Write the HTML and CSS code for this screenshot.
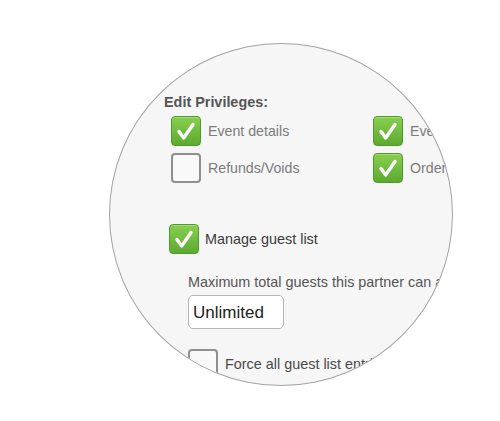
FILE: index.html
```html
<!DOCTYPE html>
<html lang="en">

<head>
    <meta charset="UTF-8" />
    <meta name="viewport" content="width=device-width, initial-scale=1.0" />
    <title>Edit Privileges</title>
    <link rel="stylesheet" href="styles.css">
</head>

<body>
    <div class="lens">
        <h3 class="section-title">Edit Privileges:</h3>

        <div class="privileges">
            <label class="check-row">
                <span class="box checked">
                    <svg viewBox="0 0 30 30"><path d="M7.5 15.5 L12.5 22.5 L22.5 8" /></svg>
                </span>
                <span class="check-label">Event details</span>
            </label>
            <label class="check-row">
                <span class="box checked">
                    <svg viewBox="0 0 30 30"><path d="M7.5 15.5 L12.5 22.5 L22.5 8" /></svg>
                </span>
                <span class="check-label">Event tickets</span>
            </label>
            <label class="check-row">
                <span class="box"></span>
                <span class="check-label">Refunds/Voids</span>
            </label>
            <label class="check-row">
                <span class="box checked">
                    <svg viewBox="0 0 30 30"><path d="M7.5 15.5 L12.5 22.5 L22.5 8" /></svg>
                </span>
                <span class="check-label">Orders</span>
            </label>
        </div>

        <label class="check-row guest-toggle">
            <span class="box checked">
                <svg viewBox="0 0 30 30"><path d="M7.5 15.5 L12.5 22.5 L22.5 8" /></svg>
            </span>
            <span class="guest-label">Manage guest list</span>
        </label>

        <div class="guest-options">
            <p class="field-label">Maximum total guests this partner can add:</p>
            <input class="field-input" type="text" value="Unlimited" readonly>

            <label class="check-row force-row">
                <span class="box"></span>
                <span class="force-label">Force all guest list entries to be approved</span>
            </label>
        </div>
    </div>
</body>

</html>
```

FILE: styles.css
```css
body {
    margin: 0;
    background-color: #ffffff;
    font-family: 'Liberation Sans', Arial, sans-serif;
}

/* round "magnifier" that crops the settings panel */
.lens {
    margin: 43px 0 0 109px;
    width: 288px;
    height: 291px;
    padding: 50px 0 0 54px;
    border: 1px solid #a3a3a3;
    border-radius: 50%;
    background-color: #f6f6f6;
    overflow: hidden;
    white-space: nowrap;
}

.section-title {
    margin: 0;
    font-size: 14.4px;
    line-height: 17px;
    font-weight: 700;
    color: #555555;
}

.privileges {
    display: grid;
    grid-template-columns: 202px auto;
    row-gap: 7px;
    margin-top: 5px;
    padding-left: 7px;
}

.check-row {
    display: flex;
    align-items: center;
    gap: 7px;
    height: 30px;
}

.box {
    flex: none;
    width: 30px;
    height: 30px;
    box-sizing: border-box;
    border: 2px solid #8f8f8f;
    border-radius: 4px;
    background-color: #f9f9f9;
}

.box.checked {
    border: 1px solid #4f9a2a;
    background: linear-gradient(#88cf4e, #5caa30);
    box-shadow: inset 0 1px 0 rgba(255, 255, 255, 0.25);
}

.box svg {
    display: block;
    width: 28px;
    height: 28px;
}

.box svg path {
    fill: none;
    stroke: #ffffff;
    stroke-width: 3.6;
    stroke-linecap: round;
    stroke-linejoin: round;
}

.check-label {
    font-size: 14.2px;
    line-height: 17px;
    color: #7c7c7c;
}

.guest-toggle {
    margin-top: 41px;
    margin-left: 5px;
    gap: 6px;
}

.guest-label {
    font-size: 14.4px;
    line-height: 17px;
    color: #3a3a3a;
}

.guest-options {
    padding-left: 24px;
}

.field-label {
    margin: 20px 0 0;
    font-size: 14.4px;
    line-height: 17px;
    color: #555555;
}

.field-input {
    display: block;
    margin-top: 4px;
    width: 96px;
    height: 34px;
    box-sizing: border-box;
    padding: 2px 0 0 4px;
    border: 1px solid #b5b5b5;
    border-radius: 5px;
    background-color: #ffffff;
    font-family: 'Liberation Sans', Arial, sans-serif;
    font-size: 17px;
    color: #222222;
    outline: none;
}

.force-row {
    margin-top: 20px;
}

.force-label {
    font-size: 14.4px;
    line-height: 17px;
    color: #4a4a4a;
}
```
